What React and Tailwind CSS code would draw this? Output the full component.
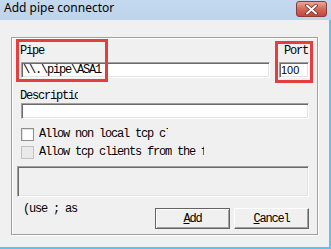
import React from 'react';

const mono = "font-['Liberation_Mono',monospace] text-[12px] tracking-[-1.2px] text-black";

const editCls =
  'h-[16px] bg-white border border-t-[#a0a0a0] border-l-[#a0a0a0] border-r-white border-b-white shadow-[inset_1px_1px_0_#696969,inset_-1px_-1px_0_#e3e3e3]';

const CloseButton = () => (
  <div className="mt-[1px] w-[31px] h-[16px] rounded-[3px] border border-[#8a3b33] bg-gradient-to-b from-[#e8a898] via-[#d2695a] to-[#c4473a] flex items-center justify-center">
    <svg width="13" height="11" viewBox="0 0 13 11">
      <path d="M2 1.5 L11 9.5 M11 1.5 L2 9.5" stroke="#6b2a24" strokeWidth="3.6" strokeLinecap="round" />
      <path d="M2 1.5 L11 9.5 M11 1.5 L2 9.5" stroke="#ffffff" strokeWidth="2" strokeLinecap="round" />
    </svg>
  </div>
);

const Checkbox = ({ label, width, disabled }) => (
  <div className="flex items-center h-[13px] ml-[1px]">
    <div
      className={
        disabled
          ? 'w-[13px] h-[13px] border border-[#c2c2c2] bg-[#e9e9e9]'
          : 'w-[13px] h-[13px] border border-[#8e8f8f] bg-white shadow-[inset_1px_1px_0_#e2e2e2]'
      }
    />
    <div
      className={`ml-[5px] leading-[13px] overflow-hidden whitespace-nowrap ${mono} ${disabled ? 'text-[#a6a6a6] [text-shadow:1px_1px_0_#fff]' : ''}`}
      style={{ width }}
    >
      {label}
    </div>
  </div>
);

export default function App() {
  return (
    <div className="relative w-[331px] h-[249px] flex flex-col overflow-hidden bg-[#f0f0f0]">
      {/* title bar */}
      <div className="h-[20px] flex items-start justify-between pl-[4px] pr-[4px] bg-gradient-to-b from-[#c3d9ef] to-[#bdd4ec]">
        <span className="font-['Noto_Sans',sans-serif] text-[12px] leading-[16px] text-black">Add pipe connector</span>
        <CloseButton />
      </div>

      {/* body */}
      <div className="flex-1 bg-[#f0f0f0] border-r-2 border-b-2 border-[#5cc3ea]">
        <div className="ml-[11px] mt-[17px] w-[307px] h-[198px] border border-[#a0a0a0] shadow-[inset_1px_1px_0_#fff,1px_1px_0_#fff] pl-[8px] pr-[8px] flex flex-col">
          <div className="flex">
            <div className="flex flex-col">
              <div className={`mt-[7px] leading-[13px] ${mono}`}>Pipe</div>
              <div className={`mt-[4px] ml-[1px] w-[249px] ${editCls} flex items-center pl-[1px] ${mono}`}>
                \\.\pipe\ASA1
              </div>
            </div>
            <div className="ml-[9px] w-[30px] flex flex-col">
              <div className={`mt-[7px] leading-[13px] text-right pr-[1px] ${mono}`}>Port</div>
              <div className={`mt-[4px] w-[30px] ${editCls} flex items-center pl-[1px] font-['Liberation_Sans',sans-serif] text-[11px] text-black`}>
                100
              </div>
            </div>
          </div>

          <div className={`mt-[12px] w-[58px] leading-[13px] overflow-hidden whitespace-nowrap ${mono}`}>Description</div>
          <div className={`ml-[1px] w-[288px] ${editCls}`} />

          <div className="mt-[9px]">
            <Checkbox label="Allow non local tcp clients" width="129px" />
          </div>
          <div className="mt-[5px]">
            <Checkbox label="Allow tcp clients from the following" width="165px" disabled />
          </div>

          <div className="mt-[7px] ml-[-3px] w-[292px] h-[31px] bg-[#f0f0f0] border border-t-[#a0a0a0] border-l-[#a0a0a0] border-r-white border-b-white shadow-[inset_1px_1px_0_#696969,inset_-1px_-1px_0_#e3e3e3]" />

          <div className="flex items-start">
            <div className={`ml-[3px] mt-[6px] w-[57px] leading-[13px] overflow-hidden whitespace-nowrap ${mono}`}>
              (use ; as separator)
            </div>
            <div className="ml-auto mt-[11px] flex gap-[4px]">
              <button className={`w-[75px] h-[21px] bg-[#f0f0f0] border border-[#646464] shadow-[inset_1px_1px_0_#fff,inset_-1px_-1px_0_#a0a0a0] flex items-center justify-center ${mono}`}>
                <span className="underline">A</span>dd
              </button>
              <button className={`w-[75px] h-[21px] bg-[#f0f0f0] border border-t-white border-l-white border-r-[#646464] border-b-[#646464] shadow-[inset_-1px_-1px_0_#a0a0a0] flex items-center justify-center ${mono}`}>
                <span className="underline">C</span>ancel
              </button>
            </div>
          </div>
        </div>
      </div>

      {/* red annotation frames */}
      <div className="absolute left-[16px] top-[39px] w-[92px] h-[43px] border-[3px] border-[#e53e3e]" />
      <div className="absolute left-[275px] top-[41px] w-[38px] h-[42px] border-[3px] border-[#e53e3e]" />
    </div>
  );
}
